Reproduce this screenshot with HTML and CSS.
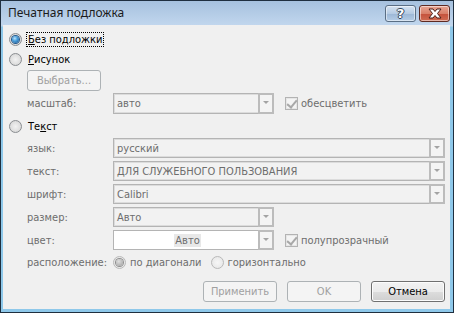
FILE: index.html
```
<!DOCTYPE html>
<html lang="ru">
<head>
<meta charset="utf-8">
<link rel="stylesheet" href="styles.css">
</head>
<body>
<div class="window">
  <div class="titlebar">
    <span class="title">Печатная подложка</span>
    <div class="caption-btns">
      <div class="cbtn help"><span>?</span></div>
      <div class="cbtn close">
        <svg width="16" height="11" viewBox="0 0 16 11"><path d="M2 1 H6 L8 3.5 L10 1 H14 L10.5 5.5 L14 10 H10 L8 7.5 L6 10 H2 L5.5 5.5 Z" fill="#fff" stroke="#4a1d16" stroke-width="1" stroke-linejoin="round"/></svg>
      </div>
    </div>
  </div>
  <div class="content">
    <div class="radio-row first">
      <span class="radio checked"></span>
      <span class="rlabel focus"><u>Б</u>ез подложки</span>
    </div>
    <div class="radio-row r2">
      <span class="radio"></span>
      <span class="rlabel"><u>Р</u>исунок</span>
    </div>
    <div class="pick-row">
      <div class="btn disabled pick">Выбрать...</div>
    </div>
    <div class="field-row scale">
      <span class="flabel">масштаб:</span>
      <div class="combo short"><span class="ctext">авто</span><span class="arrow"></span></div>
      <span class="check"></span>
      <span class="clabel">обесцветить</span>
    </div>
    <div class="radio-row r3">
      <span class="radio"></span>
      <span class="rlabel">Те<u>к</u>ст</span>
    </div>
    <div class="fields">
      <div class="field-row">
        <span class="flabel">язык:</span>
        <div class="combo wide"><span class="ctext">русский</span><span class="arrow"></span></div>
      </div>
      <div class="field-row">
        <span class="flabel">текст:</span>
        <div class="combo wide"><span class="ctext">ДЛЯ СЛУЖЕБНОГО ПОЛЬЗОВАНИЯ</span><span class="arrow"></span></div>
      </div>
      <div class="field-row">
        <span class="flabel">шрифт:</span>
        <div class="combo wide"><span class="ctext">Calibri</span><span class="arrow"></span></div>
      </div>
      <div class="field-row">
        <span class="flabel">размер:</span>
        <div class="combo short"><span class="ctext">Авто</span><span class="arrow"></span></div>
      </div>
      <div class="field-row">
        <span class="flabel">цвет:</span>
        <div class="combo short white"><span class="ctext centered"><span class="hl">Авто</span></span><span class="arrow"></span></div>
        <span class="check"></span>
        <span class="clabel">полупрозрачный</span>
      </div>
    </div>
    <div class="field-row layout">
      <span class="flabel">расположение:</span>
      <span class="radio disabled checked-grey"></span>
      <span class="clabel opt">по диагонали</span>
      <span class="radio disabled second"></span>
      <span class="clabel opt">горизонтально</span>
    </div>
    <div class="footer">
      <div class="btn disabled">Применить</div>
      <div class="btn disabled">OK</div>
      <div class="btn">Отмена</div>
    </div>
  </div>
</div>
</body>
</html>
```
FILE: styles.css
```
* { box-sizing: border-box; }
html, body { margin: 0; padding: 0; background: #fff; }
body { width: 454px; height: 313px; overflow: hidden; }

.window {
  width: 454px;
  height: 313px;
  border: 1px solid #1f2f3f;
  background: linear-gradient(#a6c1de, #c2d7ee 25px, #8ec8ea 26px, #8ec8ea);
  padding: 0 3px 3px 2px;
  display: flex;
  flex-direction: column;
  font-family: "DejaVu Sans Condensed", "DejaVu Sans", sans-serif;
  font-size: 11px;
  color: #000;
}

.titlebar {
  height: 24px;
  flex: none;
  display: flex;
  align-items: flex-start;
  justify-content: space-between;
}
.title {
  font-family: "Noto Sans", sans-serif;
  font-size: 12px;
  color: #1b1b1b;
  margin: 4px 0 0 5px;
  line-height: 16px;
}
.caption-btns {
  display: flex;
  gap: 3px;
  margin-top: 4px;
}
.cbtn {
  width: 31px;
  height: 17px;
  border: 1px solid #5a6e84;
  border-radius: 3px;
  display: flex;
  align-items: center;
  justify-content: center;
  box-shadow: inset 0 0 0 1px rgba(255,255,255,0.5);
}
.help {
  background: linear-gradient(#d6e3f1, #b5cbe3 50%, #9cb7d6 51%, #b5cde6);
}
.help span {
  font-family: "DejaVu Sans", sans-serif;
  font-weight: bold;
  font-size: 13px;
  line-height: 13px;
  color: #fff;
  text-shadow: -1px 0 #34455a, 1px 0 #34455a, 0 -1px #34455a, 0 1px #34455a;
}
.close {
  border-color: #5e2a22;
  background: linear-gradient(#e8a593, #d98069 50%, #c4513b 51%, #d16b52);
}

.content {
  flex: 1;
  background: #f0f0f0;
  padding: 0 5px 0 6px;
  display: flex;
  flex-direction: column;
}

.radio-row {
  height: 16px;
  display: flex;
  align-items: center;
}
.radio-row.first { margin-top: 6px; }
.radio-row.r2 { margin-top: 4px; }
.radio-row.r3 { margin-top: 4px; }

.radio {
  width: 13px;
  height: 13px;
  border-radius: 50%;
  border: 1px solid #8a8d91;
  background: radial-gradient(circle at 50% 50%, #f2f2f2 0, #e2e2e2 50%, #cfcfcf 100%);
  flex: none;
  position: relative;
}
.radio.checked::after {
  content: "";
  position: absolute;
  left: 2px; top: 2px;
  width: 7px; height: 7px;
  border-radius: 50%;
  background: radial-gradient(circle at 40% 35%, #bfe4fb 0, #4aa0dd 40%, #16508a 100%);
  box-shadow: 0 0 0 1px #24588c;
}
.radio.disabled {
  border-color: #b9b9b9;
  background: radial-gradient(#f6f6f6, #e4e4e4);
}
.radio.checked-grey::after {
  content: "";
  position: absolute;
  left: 2px; top: 2px;
  width: 7px; height: 7px;
  border-radius: 50%;
  background: radial-gradient(circle at 40% 35%, #e0e0e0, #9c9c9c);
  box-shadow: 0 0 0 1px #8e8e8e;
}
.rlabel {
  margin-left: 4px;
  line-height: 13px;
  padding: 0 1px;
  border: 1px solid transparent;
}
.rlabel.focus { border: 1px dotted #000; }
u { text-decoration: underline; text-underline-offset: 1px; }

.pick-row {
  margin-top: 3px;
  padding-left: 18px;
  display: flex;
}
.btn {
  width: 74px;
  height: 21px;
  border: 1px solid #707070;
  border-radius: 3px;
  background: linear-gradient(#f2f2f2, #ebebeb 50%, #dddddd 51%, #cfcfcf);
  box-shadow: inset 0 0 0 1px #fcfcfc;
  display: flex;
  align-items: center;
  justify-content: center;
  color: #000;
}
.btn.disabled {
  border-color: #adb2b5;
  background: #f4f4f4;
  color: #a0a0a0;
  box-shadow: none;
}

.field-row {
  display: flex;
  align-items: center;
  padding-left: 18px;
  height: 21px;
}
.field-row.scale { margin-top: 2px; }
.flabel {
  width: 86px;
  flex: none;
  color: #6d6d6d;
}
.fields {
  margin-top: 4px;
  display: flex;
  flex-direction: column;
  gap: 3px;
}
.fields .field-row { height: 20px; }

.combo {
  height: 100%;
  border: 1px solid #b4b4b4;
  box-shadow: inset 0 0 0 1px #dcdcdc;
  background: #f2f2f2;
  display: flex;
  align-items: stretch;
  color: #6d6d6d;
}
.combo.short { width: 161px; }
.combo.wide { flex: 1; }
.combo.white { background: #fff; box-shadow: none; }
.ctext {
  flex: 1;
  padding-left: 3px;
  display: flex;
  align-items: center;
  white-space: nowrap;
  overflow: hidden;
}
.ctext.centered { justify-content: center; color: #6d6d6d; }
.hl { background: #e8e8e8; padding: 0 1px; }
.arrow {
  width: 16px;
  flex: none;
  border: 2px solid #bcbcbc;
  margin: -1px -1px -1px 0;
  background: #f4f4f4;
  position: relative;
}
.arrow::after {
  content: "";
  position: absolute;
  left: 3px;
  top: 6px;
  border-left: 3px solid transparent;
  border-right: 3px solid transparent;
  border-top: 3px solid #a3a3a3;
}

.check {
  width: 13px;
  height: 13px;
  flex: none;
  margin-left: 11px;
  border: 1px solid #b3b3b3;
  background: #f4f4f4;
  box-shadow: inset 0 0 0 1px #e6e6e6;
  position: relative;
}
.check::after {
  content: "";
  position: absolute;
  left: 3px;
  top: 0px;
  width: 4px;
  height: 8px;
  border-right: 2px solid #a8a8a8;
  border-bottom: 2px solid #a8a8a8;
  transform: rotate(40deg);
}
.clabel {
  margin-left: 3px;
  color: #6d6d6d;
  white-space: nowrap;
}
.clabel.opt { margin-left: 4px; }

.field-row.layout {
  margin-top: 4px;
  height: 16px;
}
.radio.second { margin-left: 9px; }

.footer {
  margin-top: 11px;
  display: flex;
  justify-content: flex-end;
  gap: 10px;
}
```
